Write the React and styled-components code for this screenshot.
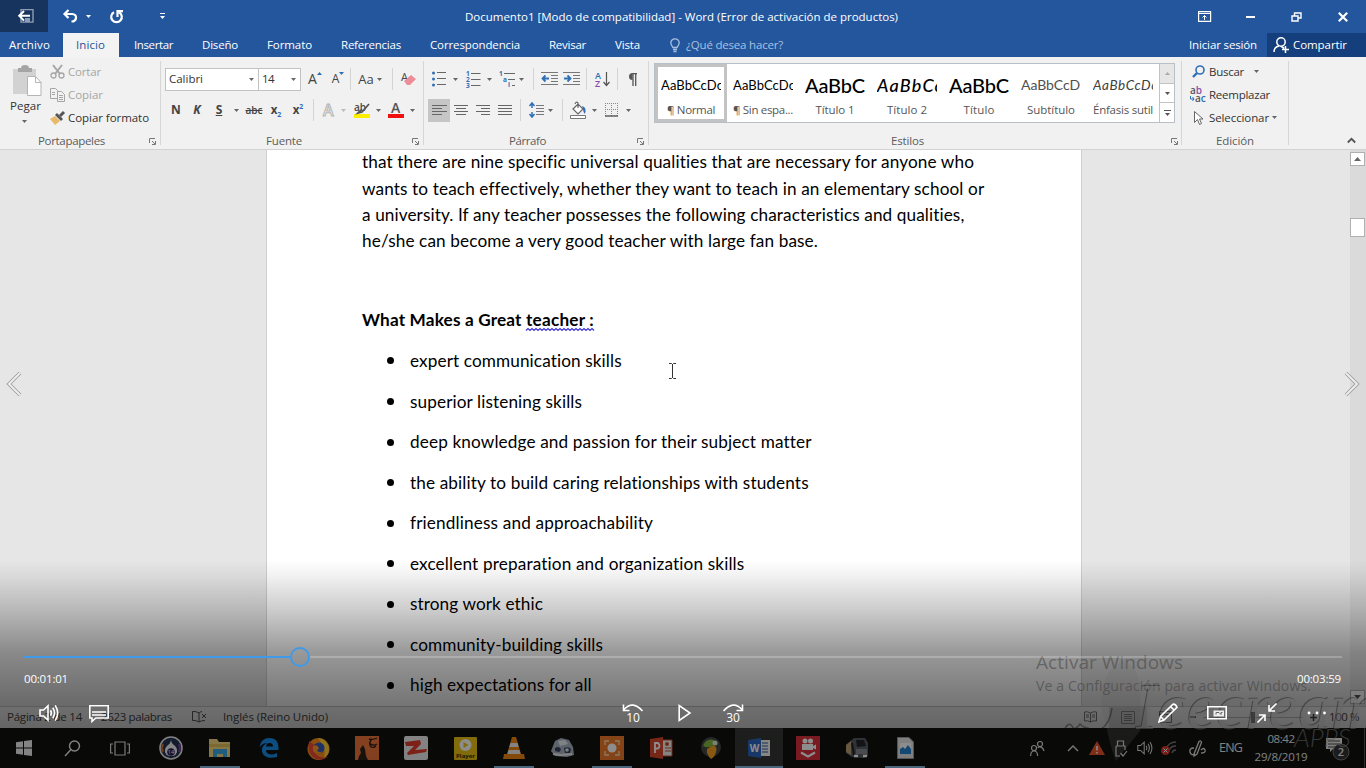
import React, { useLayoutEffect, useRef } from 'react';
import styled, { createGlobalStyle, css } from 'styled-components';

const Global = createGlobalStyle`
  * { box-sizing: border-box; }
  body { margin: 0; overflow: hidden; background: #000; }
  svg { display: block; flex: none; overflow: visible; }
`;

const ui = "'Open Sans', 'Noto Sans', sans-serif";
const calibri = "Lato, 'Open Sans', sans-serif";

/* ---------- text fitted to a measured width by tracking ---------- */
const Label = styled.span`
  display: block;
  flex: none;
  white-space: pre;
  font-family: ${(p) => p.$font || ui};
  font-size: ${(p) => p.$size || 11.5}px;
  line-height: ${(p) => p.$lh || 16}px;
  font-weight: ${(p) => p.$weight || 400};
  font-style: ${(p) => (p.$italic ? 'italic' : 'normal')};
  color: ${(p) => p.$color || 'inherit'};
  margin-left: ${(p) => p.$g || 0}px;
`;

function Text({ w, children, ...rest }) {
  const ref = useRef(null);
  useLayoutEffect(() => {
    const el = ref.current;
    if (!w) return;
    el.style.width = 'max-content';
    el.style.letterSpacing = '0px';
    const natural = el.getBoundingClientRect().width;
    el.style.letterSpacing = `${(w - natural) / String(children).length}px`;
    el.style.width = `${w}px`;
  }, [w, children]);
  return <Label ref={ref} {...rest}>{children}</Label>;
}

/* ---------- shell ---------- */
const Screen = styled.div`
  position: relative;
  width: 1366px;
  height: 768px;
  overflow: hidden;
  display: flex;
  flex-direction: column;
  font-family: ${ui};
`;
const Row = styled.div`
  display: flex;
  align-items: center;
  flex: none;
  height: ${(p) => (p.$h ? `${p.$h}px` : 'auto')};
  padding-left: ${(p) => p.$pl || 0}px;
`;
const Cell = styled.div`
  flex: none;
  width: ${(p) => p.$w}px;
  height: ${(p) => (p.$h ? `${p.$h}px` : 'auto')};
  margin-left: ${(p) => p.$g || 0}px;
  display: flex;
  align-items: center;
  justify-content: center;
  background: ${(p) => p.$bg || 'none'};
`;
const TitleBar = styled(Row)`
  height: 33px;
  background: #24569e;
  color: #fff;
`;
const SaveBox = styled.div`
  width: 48px;
  height: 32px;
  align-self: flex-start;
  background: #17345f;
  display: flex;
  align-items: center;
  justify-content: center;
  padding-left: 4px;
`;
const TabBar = styled(Row)`
  height: 24px;
  background: #24569e;
  color: #fff;
`;
const ActiveTab = styled.div`
  width: 56px;
  height: 24px;
  margin-left: 13px;
  padding-left: 13px;
  display: flex;
  align-items: center;
  background: #f3f3f3;
  color: #24569e;
`;
const Share = styled.div`
  width: 99px;
  height: 24px;
  margin-left: 10px;
  padding-left: 6px;
  display: flex;
  align-items: center;
  background: #143f7c;
`;
const Ribbon = styled.div`
  display: flex;
  flex: none;
  height: 93px;
  background: #f1f1f1;
  border-bottom: 1px solid #d2d2d2;
  color: #444;
`;
const Group = styled.div`
  position: relative;
  flex: none;
  width: ${(p) => p.$w}px;
  display: flex;
  flex-direction: column;
  padding-top: 6px;
  &::after {
    content: '';
    position: absolute;
    right: 0;
    top: 4px;
    width: 1px;
    height: 84px;
    background: #d6d6d6;
  }
`;
const ClipTools = styled.div`
  display: flex;
  height: 70px;
`;
const PasteButton = styled.div`
  width: 34px;
  margin-left: 8px;
  padding-top: 2px;
`;
const PasteCaret = styled.div`
  display: flex;
  justify-content: center;
  padding: 6px 2px 0 0;
`;
const ClipList = styled.div`
  margin-top: -3px;
`;
const Collapse = styled.div`
  display: flex;
  align-items: flex-end;
  width: 67px;
  padding: 0 0 6px 58px;
`;
const GroupFoot = styled.div`
  display: flex;
  align-items: center;
  height: 16px;
  margin-top: auto;
  color: #5c5c5c;
`;
const Sep = styled.div`
  flex: none;
  width: 1px;
  height: 22px;
  margin-left: ${(p) => p.$g || 0}px;
  background: #d4d4d4;
`;
const Combo = styled.div`
  flex: none;
  width: ${(p) => p.$w}px;
  height: 23px;
  margin-left: ${(p) => p.$g || 0}px;
  padding: 0 4px 0 3px;
  border: 1px solid #c2c2c2;
  background: #fff;
  display: flex;
  align-items: center;
  justify-content: space-between;
  color: #333;
`;
const Glyph = styled.span`
  font-family: ${ui};
  font-size: ${(p) => p.$size || 13}px;
  font-weight: ${(p) => p.$weight || 400};
  font-style: ${(p) => (p.$italic ? 'italic' : 'normal')};
  text-decoration: ${(p) => p.$deco || 'none'};
  color: ${(p) => p.$color || '#444'};
  line-height: 16px;
  sub, sup { font-size: 7px; color: #2f6fb5; line-height: 0; }
`;
const Gallery = styled.div`
  display: flex;
  width: 521px;
  height: 60px;
  margin-left: 5px;
  border: 1px solid #b9bfc6;
  background: #fff;
`;
const StyleCard = styled.div`
  flex: none;
  width: 72px;
  height: 58px;
  display: flex;
  flex-direction: column;
  align-items: center;
  justify-content: space-between;
  padding: ${(p) => (p.$sel ? '7px 0 1px' : '10px 0 4px')};
  ${(p) => p.$sel && css`
    border: 3px solid #c3c3c3;
  `}
`;
const Sample = styled.div`
  width: 60px;
  height: 22px;
  overflow: hidden;
  display: flex;
  align-items: center;
  justify-content: flex-start;
`;
const GalleryScroll = styled.div`
  width: 15px;
  display: flex;
  flex-direction: column;
  border-left: 1px solid #c3c3c3;
`;
const ScrollCell = styled.div`
  flex: 1;
  display: flex;
  align-items: center;
  justify-content: center;
  background: ${(p) => p.$bg || '#fff'};
  & + & { border-top: 1px solid #c3c3c3; }
`;
const Workspace = styled.div`
  flex: none;
  height: 556px;
  display: flex;
  background: #e6e6e6;
  overflow: hidden;
`;
const Page = styled.div`
  width: 816px;
  height: 556px;
  margin-left: 266px;
  border-left: 1px solid #cfcfcf;
  border-right: 1px solid #cfcfcf;
  padding-left: 95px;
  background: #fff;
  color: #000;
`;
const Paragraph = styled.div`
  margin-top: -1px;
  height: 157px;
`;
const Heading = styled.div`
  display: flex;
  height: 27px;
  margin-bottom: 7.7px;
`;
const Wavy = styled.div`
  display: flex;
  flex-direction: column;
`;
const Bullet = styled.div`
  display: flex;
  align-items: center;
  height: 40.55px;
  padding-left: 25px;
  &::before {
    content: '';
    width: 7px;
    height: 7px;
    margin-right: 16px;
    border-radius: 50%;
    background: #000;
  }
`;
const Scrollbar = styled.div`
  width: 16px;
  height: 556px;
  margin-left: auto;
  padding: 2px 1px 2px 0;
  background: #dadada;
  display: flex;
  flex-direction: column;
`;
const ScrollBox = styled.div`
  height: ${(p) => p.$h}px;
  margin-top: ${(p) => p.$mt || 0};
  border: 1px solid #b0b0b0;
  background: #fff;
  display: flex;
  align-items: center;
  justify-content: center;
`;
const StatusBar = styled(Row)`
  height: 22px;
  background: #f1f1f1;
  border-top: 1px solid #c6c6c6;
  color: #444;
  padding-bottom: 1px;
`;
const Taskbar = styled(Row)`
  height: 40px;
  background: #10110e;
  color: #e8e8e8;
`;
const Task = styled.div`
  flex: none;
  width: ${(p) => p.$w || 48}px;
  height: 40px;
  display: flex;
  flex-direction: column;
  align-items: center;
  justify-content: center;
  background: ${(p) => (p.$active ? '#333533' : 'none')};
  box-shadow: ${(p) => (p.$active ? 'inset 0 -2px #86bce4' : 'none')};
`;
const TaskOpen = styled(Task)`
  background: linear-gradient(#86bce4, #86bce4) center bottom / 40px 2px no-repeat;
`;
const Clock = styled.div`
  width: 54px;
  margin-left: 12px;
  display: flex;
  flex-direction: column;
  align-items: center;
`;
const Peek = styled.div`
  width: 1px;
  height: 40px;
  margin-left: 15px;
  background: #555;
`;

/* ---------- things that lie over the window ---------- */
const Watermark = styled.div`
  position: absolute;
  left: 1036px;
  top: 649px;
  color: rgba(125, 125, 125, 0.6);
`;
const Brand = styled.div`
  position: absolute;
  left: 1060px;
  top: 655px;
  width: 306px;
  height: 110px;
`;
const BrandWord = styled.div`
  position: absolute;
  left: 76px;
  top: 18px;
  font-family: 'Liberation Serif', serif;
  font-style: italic;
  font-size: 66px;
  line-height: 68px;
  color: #e2e2e2;
  opacity: 0.42;
  text-shadow: -1px -1px 0 #303030;
`;
const BrandSub = styled.div`
  position: absolute;
  left: 234px;
  top: 65px;
  font-family: Lato, sans-serif;
  font-weight: 300;
  font-style: italic;
  font-size: 26px;
  line-height: 34px;
  color: rgba(150, 150, 150, 0.6);
`;
const Player = styled.div`
  position: absolute;
  inset: 560px 0 0 0;
  display: flex;
  flex-direction: column;
  color: #fff;
  background: linear-gradient(
    rgba(0, 0, 0, 0) 0,
    rgba(0, 0, 0, 0.05) 15px,
    rgba(0, 0, 0, 0.2) 50px,
    rgba(0, 0, 0, 0.4) 92px,
    rgba(0, 0, 0, 0.53) 140px,
    rgba(0, 0, 0, 0.58) 168px,
    rgba(0, 0, 0, 0.44) 169px,
    rgba(0, 0, 0, 0.46) 208px
  );
`;
const Seek = styled.div`
  display: flex;
  align-items: center;
  height: 20px;
  margin: 87px 24px 0;
`;
const Played = styled.div`
  width: 266px;
  height: 2px;
  background: #3f9bea;
`;
const Thumb = styled.div`
  width: 20px;
  height: 20px;
  border: 2px solid #3f9bea;
  border-radius: 50%;
`;
const Remaining = styled.div`
  flex: 1;
  height: 2px;
  background: rgba(255, 255, 255, 0.22);
`;
const Times = styled.div`
  display: flex;
  justify-content: space-between;
  margin: 4px 25px 0 24px;
`;
const Controls = styled.div`
  display: flex;
  align-items: center;
  height: 30px;
  margin-top: 11px;
`;
const Chevron = styled.div`
  position: absolute;
  top: 370px;
  left: ${(p) => p.$x}px;
`;
const Caret = styled.div`
  position: absolute;
  left: 668px;
  top: 363px;
`;

/* ---------- icons ---------- */
const Svg = ({ w = 16, h = 16, vw, vh, children, ...r }) => (
  <svg width={w} height={h} viewBox={`0 0 ${vw || w} ${vh || h}`} fill="none" {...r}>{children}</svg>
);
const Down = ({ c = '#666', g, w = 7 }) => (
  <Cell $w={w} $g={g}><Svg w={5} h={3}><path d="M0 0h5L2.5 3z" fill={c} /></Svg></Cell>
);
const Launcher = () => (
  <Svg w={7} h={7}><path d="M.5 5V.5H6M3 3l3 3M6.5 3v3.5H3" stroke="#777" /></Svg>
);
const Lines = ({ rows, w = 16 }) => (
  <Svg w={w} h={10}>
    {rows.map(([a, b], i) => <path key={i} d={`M${a} ${i * 3 + 0.5}H${b}`} stroke="#666" />)}
  </Svg>
);
const Volume = ({ w = 20, sw = 1.6, c = '#fff' }) => (
  <Svg w={w} h={w} vw={20} vh={20} stroke={c} strokeWidth={sw}>
    <path d="M1 7h3.500L9 2.800v14.400L4.500 13H1zM11.500 7.200q1.800 2.800 0 5.600M13.800 4.800q3.400 5.200 0 10.400M16.200 2.400q5 7.600 0 15.200" />
  </Svg>
);
const Skip = ({ n, flip }) => (
  <Svg w={22} h={20}>
    <g transform={flip ? 'translate(22 0) scale(-1 1)' : undefined} stroke="#fff" strokeWidth="1.600">
      <path d="M2 6.500Q10.500-3 20.500 8M1.500 1.500v6h6" />
    </g>
    <text x="11" y="18.500" textAnchor="middle" fill="#fff" fontFamily="Open Sans" fontSize="12">{n}</text>
  </Svg>
);

const styles = [
  { s: 'AaBbCcDc', n: '¶ Normal', nw: 48, size: 13, w: 62, sel: true },
  { s: 'AaBbCcDc', n: '¶ Sin espa...', nw: 60, size: 13, w: 62 },
  { s: 'AaBbC', n: 'Título 1', nw: 39, size: 20, w: 60, h: 1 },
  { s: 'AaBbCc', n: 'Título 2', nw: 40, size: 18, w: 67, it: true, h: 1 },
  { s: 'AaBbC', n: 'Título', nw: 31, size: 20, w: 60, h: 1 },
  { s: 'AaBbCcD', n: 'Subtítulo', nw: 48, size: 14, w: 59, c: '#505050' },
  { s: 'AaBbCcDc', n: 'Énfasis sutil', nw: 60, size: 13.5, w: 65, c: '#404040', it: true },
];

const skills = [
  ['expert communication skills', 212],
  ['superior listening skills', 172],
  ['deep knowledge and passion for their subject matter', 401],
  ['the ability to build caring relationships with students', 399],
  ['friendliness and approachability', 243],
  ['excellent preparation and organization skills', 335],
  ['strong work ethic', 133],
  ['community-building skills', 193],
  ['high expectations for all', 182],
];

const Clipboard = () => (
  <Group $w={161}>
    <ClipTools>
      <PasteButton>
        <Svg w={34} h={33}>
          <path d="M5 4h23v25H5z" fill="#d2d2d2" />
          <path d="M10 3h3q0-3 4-3t4 3h3v4H10z" fill="#a5a5a5" />
          <path d="M19.500 11.500h8l5.500 6v13H19.500z" fill="#fff" stroke="#b5b5b5" />
          <path d="M27.500 11.500v6h6" stroke="#b5b5b5" />
        </Svg>
        <Text w={31} $g={2} $color="#333">Pegar</Text>
        <PasteCaret><Down w={8} /></PasteCaret>
      </PasteButton>
      <ClipList>
        <Row $h={23} $pl={8}>
          <Svg w={15} h={15} stroke="#a6a6a6" strokeWidth="1.300">
            <circle cx="3.500" cy="11.500" r="2.500" /><circle cx="11.500" cy="11.500" r="2.500" /><path d="M3 1l7 9M12 1L5 10" strokeWidth="2" />
          </Svg>
          <Text w={33} $g={3} $color="#a6a6a6">Cortar</Text>
        </Row>
        <Row $h={23} $pl={8}>
          <Svg w={15} h={14} stroke="#a6a6a6">
            <path d="M.5.5h5l2 2v8h-7zM7.500 3.500h4l3 3v7h-7zM2 4.500h3M2 6.500h3M9 7.500h4M9 9.500h4M9 11.500h4" />
          </Svg>
          <Text w={35} $g={3} $color="#a6a6a6">Copiar</Text>
        </Row>
        <Row $h={23} $pl={8}>
          <Svg w={15} h={14}>
            <path d="M0 8l5-3 5 5-5 4z" fill="#e8b968" /><path d="M5 4l2-2 6 6-2 2z" fill="#555" /><path d="M10 5l4-4" stroke="#555" strokeWidth="3" />
          </Svg>
          <Text w={81} $g={3} $color="#333">Copiar formato</Text>
        </Row>
      </ClipList>
    </ClipTools>
    <GroupFoot><Text w={67} $g={38}>Portapapeles</Text><Cell $w={7} $g={44}><Launcher /></Cell></GroupFoot>
  </Group>
);

const FontGroup = () => (
  <Group $w={263}>
    <Row $h={32}>
      <Combo $w={94} $g={4}><Text w={34}>Calibri</Text><Down w={5} /></Combo>
      <Combo $w={43} $g={-1}><Text w={12}>14</Text><Down w={5} /></Combo>
      <Cell $w={16} $g={6}><Glyph $size={14}>A</Glyph><Svg w={5} h={14}><path d="M0 3h5L2.500 0z" fill="#2f6fb5" /></Svg></Cell>
      <Cell $w={16} $g={7}><Glyph $size={12}>A</Glyph><Svg w={5} h={14}><path d="M0 0h5L2.500 3z" fill="#2f6fb5" /></Svg></Cell>
      <Sep $g={4} />
      <Cell $w={18} $g={6}><Glyph $size={13}>Aa</Glyph></Cell><Down g={1} />
      <Sep $g={9} />
      <Cell $w={18} $g={7}>
        <Svg w={16} h={16}>
          <text x="0" y="10" fontFamily="Open Sans" fontSize="11" fill="#444">A</text>
          <path d="M3 10l7-6 5 4-6 6H6z" fill="#ec8d97" />
        </Svg>
      </Cell>
    </Row>
    <Row $h={30}>
      <Cell $w={14} $g={8}><Glyph $weight={700} $size={12}>N</Glyph></Cell>
      <Cell $w={14} $g={7}><Glyph $weight={700} $size={12} $italic>K</Glyph></Cell>
      <Cell $w={14} $g={8}><Glyph $weight={700} $size={12} $deco="underline">S</Glyph></Cell>
      <Down g={7} />
      <Cell $w={18} $g={5}><Glyph $size={10} $weight={600} $deco="line-through">abc</Glyph></Cell>
      <Cell $w={16} $g={5}><Glyph $weight={700} $size={11.5}>x<sub>2</sub></Glyph></Cell>
      <Cell $w={16} $g={6}><Glyph $weight={700} $size={11.5}>x<sup>2</sup></Glyph></Cell>
      <Sep $g={7} />
      <Cell $w={16} $g={7}>
        <Svg w={16} h={16}><text x="2" y="13.500" fontFamily="Open Sans" fontWeight="600" fontSize="16" fill="#f4f4f4" stroke="#b5b5b5">A</text></Svg>
      </Cell>
      <Down g={3} c="#bbb" />
      <Cell $w={18} $g={6}>
        <Svg w={18} h={16}>
          <path d="M1 12h16v4H1z" fill="#ffee00" />
          <text x="1" y="8.500" fontFamily="Open Sans" fontWeight="600" fontSize="10" fill="#444">ab</text>
          <path d="M16 2L9 10l-4 1 3-3" stroke="#555" strokeWidth="1.800" />
        </Svg>
      </Cell>
      <Down g={4} />
      <Cell $w={16} $g={6}>
        <Svg w={16} h={16}><path d="M0 12h16v4H0z" fill="#f01010" /><text x="3" y="10.500" fontFamily="Open Sans" fontWeight="600" fontSize="14" fill="#555">A</text></Svg>
      </Cell>
      <Down g={5} />
    </Row>
    <GroupFoot><Text w={36} $g={105}>Fuente</Text><Cell $w={7} $g={110}><Launcher /></Cell></GroupFoot>
  </Group>
);

const ParagraphGroup = () => (
  <Group $w={225}>
    <Row $h={32}>
      <Cell $w={16} $g={7}>
        <Svg w={14} h={16}>{[2, 8, 14].map((y) => <g key={y}><circle cx="1.500" cy={y} r="1.500" fill="#2f6fb5" /><path d={`M5 ${y - 0.5}h9`} stroke="#666" /></g>)}</Svg>
      </Cell>
      <Down g={5} />
      <Cell $w={16} $g={6}>
        <Svg w={15} h={16}>{[1, 2, 3].map((n) => <g key={n}><text x="0" y={n * 6 - 1} fontFamily="Open Sans" fontWeight="700" fontSize="6.500" fill="#2f6fb5">{n}</text><path d={`M5 ${n * 6 - 3.5}h9.500`} stroke="#666" /></g>)}</Svg>
      </Cell>
      <Down g={5} />
      <Cell $w={18} $g={5}>
        <Svg w={17} h={16}>
          <path d="M5 2.500h11M9 8.500h7M13 14.500h3" stroke="#666" />
          <text x="0" y="5" fontFamily="Open Sans" fontWeight="700" fontSize="6.500" fill="#2f6fb5">1</text>
          <text x="4" y="11" fontFamily="Open Sans" fontWeight="700" fontSize="6.500" fill="#2f6fb5">a</text>
          <text x="9" y="16" fontFamily="Open Sans" fontWeight="700" fontSize="6.500" fill="#2f6fb5">i</text>
        </Svg>
      </Cell>
      <Down g={2} />
      <Sep $g={8} />
      {['M4.500 3.500L1.500 6.500L4.500 9.500M2 6.500H8', 'M4.500 3.500l3 3l-3 3M7 6.500H1'].map((d, i) => (
        <Cell key={d} $w={17} $g={i ? 5 : 7}>
          <Svg w={17} h={14}>
            <path d="M0 .5h17M10 3.500h7M10 6.500h7M10 9.500h7M0 12.500h17" stroke="#777" />
            <path d={d} stroke="#2f6fb5" strokeWidth="1.800" />
          </Svg>
        </Cell>
      ))}
      <Sep $g={6} />
      <Cell $w={16} $g={7}>
        <Svg w={15} h={17}>
          <text x="0" y="7.500" fontFamily="Open Sans" fontWeight="600" fontSize="9" fill="#2f6fb5">A</text>
          <text x="0" y="16" fontFamily="Open Sans" fontWeight="600" fontSize="9" fill="#8a4bab">Z</text>
          <path d="M11.500 1v13M8.500 11l3 3.500 3-3.500" stroke="#555" strokeWidth="1.200" />
        </Svg>
      </Cell>
      <Sep $g={7} />
      <Cell $w={14} $g={7}>
        <Svg w={10} h={13}><path d="M10 .7H5M6 0v13M8.700 0v13" stroke="#555" strokeWidth="1.300" /><path d="M5.500 0a3.500 3.500 0 0 0 0 7z" fill="#555" /></Svg>
      </Cell>
    </Row>
    <Row $h={30}>
      <Cell $w={22} $h={23} $g={4} $bg="#c6c6c6"><Lines rows={[[0, 15], [0, 10], [0, 15], [0, 10]]} w={15} /></Cell>
      <Cell $w={16} $g={3}><Lines rows={[[1, 15], [3, 13], [1, 15], [3, 13]]} /></Cell>
      <Cell $w={16} $g={6}><Lines rows={[[1, 15], [6, 15], [1, 15], [6, 15]]} /></Cell>
      <Cell $w={16} $g={6}><Lines rows={[[1, 15], [1, 15], [1, 15], [1, 15]]} /></Cell>
      <Sep $g={7} />
      <Cell $w={16} $g={7}>
        <Svg w={15} h={16}>
          <path d="M3 1v5M3 10v5M.5 4L3 1l2.500 3M.5 12L3 15l2.500-3" stroke="#2f6fb5" strokeWidth="1.500" />
          <path d="M7 3.500h8M7 6.500h8M7 9.500h8M7 12.500h8" stroke="#777" />
        </Svg>
      </Cell>
      <Down g={3} />
      <Sep $g={8} />
      <Cell $w={18} $g={6}>
        <Svg w={17} h={17}>
          <path d="M3 7l5-5 5 5-5 5zM8 6V1Q6-1 5 2" stroke="#666" strokeWidth="1.200" fill="#fff" />
          <path d="M12 4q5 1 3 8-2-2-2-5z" fill="#2f6fb5" /><path d="M.5 13.500h15v3H.5z" fill="#fff" stroke="#777" />
        </Svg>
      </Cell>
      <Down g={4} />
      <Cell $w={15} $g={6}>
        <Svg w={13} h={14}><path d="M.5 0v13M12.500 0v13M6.500 0v13M0 .5h13M0 6.500h13" stroke="#888" strokeDasharray="1 1" /><path d="M0 13h13" stroke="#555" strokeWidth="1.400" /></Svg>
      </Cell>
      <Down g={6} />
    </Row>
    <GroupFoot><Text w={37} $g={85}>Párrafo</Text><Cell $w={7} $g={91}><Launcher /></Cell></GroupFoot>
  </Group>
);

const StylesGroup = () => (
  <Group $w={533}>
    <Gallery>
      {styles.map((s, i) => (
        <StyleCard key={i} $sel={s.sel}>
          <Sample><Text w={s.w} $font={calibri} $size={s.size} $lh={22} $color={s.c || '#000'} $italic={s.it} $weight={s.h ? 500 : 400}>{s.s}</Text></Sample>
          <Text w={s.nw} $color="#555">{s.n}</Text>
        </StyleCard>
      ))}
      <GalleryScroll>
        <ScrollCell $bg="#e6e6e6"><Svg w={5} h={3}><path d="M0 3h5L2.500 0z" fill="#aaa" /></Svg></ScrollCell>
        <ScrollCell><Svg w={5} h={3}><path d="M0 0h5L2.500 3z" fill="#555" /></Svg></ScrollCell>
        <ScrollCell><Svg w={7} h={6}><path d="M0 .5h7" stroke="#555" /><path d="M1 3h5L3.500 6z" fill="#555" /></Svg></ScrollCell>
      </GalleryScroll>
    </Gallery>
    <GroupFoot><Text w={33} $g={242}>Estilos</Text><Cell $w={7} $g={247}><Launcher /></Cell></GroupFoot>
  </Group>
);

const EditGroup = () => (
  <Group $w={107}>
    <Row $h={17} $pl={10}>
      <Svg w={13} h={13}><circle cx="8" cy="5" r="4" stroke="#2f6fb5" strokeWidth="1.600" /><path d="M5 8L1 12" stroke="#2f6fb5" strokeWidth="2.400" /></Svg>
      <Text w={35} $g={4} $color="#333">Buscar</Text><Down g={9} />
    </Row>
    <Row $h={29} $pl={8}>
      <Svg w={17} h={16}>
        <text x="0" y="7" fontFamily="Open Sans" fontWeight="600" fontSize="10" fill="#555">a<tspan fill="#8a4bab">b</tspan></text>
        <text x="5" y="14.500" fontFamily="Open Sans" fontWeight="600" fontSize="10" fill="#555">a<tspan fill="#2f6fb5">c</tspan></text>
        <path d="M.5 9v3h3.500M2.500 10l1.500 2-1.500 2" stroke="#2f6fb5" />
      </Svg>
      <Text w={61} $g={2} $color="#333">Reemplazar</Text>
    </Row>
    <Row $h={17} $pl={12}>
      <Svg w={9} h={14}><path d="M.5.5v11l3-3 2 5 2-1-2-4.500h3.500z" stroke="#666" fill="#fff" /></Svg>
      <Text w={60} $g={6} $color="#333">Seleccionar</Text><Down g={2} />
    </Row>
    <GroupFoot><Text w={38} $g={34}>Edición</Text></GroupFoot>
  </Group>
);

const tabs = [
  ['Insertar', 39, 15], ['Diseño', 36, 29], ['Formato', 45, 29], ['Referencias', 60, 29],
  ['Correspondencia', 90, 29], ['Revisar', 37, 29], ['Vista', 25, 29],
];

const Bar = () => (
  <Taskbar>
    <Task><Svg w={16} h={16}><path d="M0 2.300L7 1.300v6.300H0zM8 1.100L16 0v7.600H8zM0 8.500h7v6.300L0 13.800zM8 8.500h8V16l-8-1.100z" fill="#eee" /></Svg></Task>
    <Task><Svg w={17} h={17} stroke="#eee" strokeWidth="1.400"><circle cx="10.500" cy="6" r="5" /><path d="M7 9.500L1 16" /></Svg></Task>
    <Task><Svg w={20} h={15} stroke="#ddd" strokeWidth="1.200"><path d="M5 1h10v13H5zM3 3H.6v9H3M17 3h2.400v9H17" /></Svg></Task>
    <Task $w={54}>
      <Svg w={24} h={24}><circle cx="12" cy="12" r="11" fill="#223252" stroke="#e8e8e8" strokeWidth="1.600" /><path d="M4 8a9 9 0 0 0 0 8" stroke="#cc6b28" strokeWidth="2" /><path d="M20 8a9 9 0 0 1 0 8" stroke="#7a3f9a" strokeWidth="2" /><path d="M12 3q0 4 3 6 5 4 2 9-1 2-5 2t-5-2q-3-5 2-9 3-2 3-6" fill="#f2f2f2" /><circle cx="12" cy="16" r="3.800" fill="#2b2050" /><text x="12" y="18.200" textAnchor="middle" fontSize="5.500" fontFamily="Open Sans" fill="#fff">14</text></Svg>
    </Task>
    <TaskOpen $w={44}>
      <Svg w={22} h={19}><path d="M0 0h8l2 3h11v15H0z" fill="#f3d77e" /><path d="M0 5h21v3H0z" fill="#e3bd58" /><path d="M4 10h14v8h-4v-3H8v3H4z" fill="#3ba9e8" /></Svg>
    </TaskOpen>
    <Task $w={54}>
      <Svg w={20} h={20}><path d="M.5 9Q2 0 10.500 0 19 0 19.500 9v3H7q0 4 5 4.500 3 0 6-1.500v4Q6 22 3 14 2 8 8 5 4 5 .5 9zM7 8.500h7Q14 5 10.500 5 7.500 5 7 8.500z" fill="#178be8" fillRule="evenodd" /></Svg>
    </Task>
    <Task $w={44}>
      <Svg w={23} h={23}><circle cx="11.500" cy="12" r="11" fill="#ff8c1a" /><path d="M2 4Q0 15 6 20t15 0Q10 22 8 15 6 10 10 8L6 7z" fill="#ee4a38" /><path d="M11 1q10 1 11 11 0 6-5 9 3-9-6-20" fill="#ffd23a" /><circle cx="12" cy="11" r="5.500" fill="#3558b8" /><path d="M6 9q4-2 6 2l-2 3q3 2 6 0-5 6-10 0z" fill="#ff9b20" /></Svg>
    </Task>
    <Task $w={54}>
      <Svg w={24} h={24}><path d="M0 0h24v24H0z" fill="#ef7438" /><path d="M3 24q1-5 3-7l-1-4 3-4 2 4 1 7 2 4z" fill="#2b2018" /><path d="M14 3q4 1 8-1M15 7.500q3 3 7 .5M17 3q-4 4-1 8 3 1 5-1" stroke="#2b2018" strokeWidth="1.300" /></Svg>
    </Task>
    <Task $w={44}>
      <Svg w={24} h={24}><rect width="24" height="24" rx="2" fill="#ececec" /><path d="M1 6l15-2 1 4-6 6 12-1-1 3-18 3-1-2 7-7-8 0z" fill="#e23c2c" /></Svg>
    </Task>
    <Task $w={54}>
      <Svg w={23} h={23}><rect width="23" height="23" rx="1" fill="#ebc313" /><circle cx="11.500" cy="8" r="6" fill="#fff" /><path d="M9.500 5v6l5-3z" fill="#ebc313" /><text x="11.500" y="20.500" textAnchor="middle" fontFamily="Open Sans" fontWeight="700" fontSize="6" fill="#332b00">Player</text></Svg>
    </Task>
    <TaskOpen $w={44}>
      <Svg w={22} h={22}><path d="M1 17h20l1 5H0zM9 0h4l5 17H4z" fill="#f18713" /><path d="M7.500 6h7l1.200 4H6.300zM5.500 13h11l1 4h-13z" fill="#eee" /></Svg>
    </TaskOpen>
    <Task $w={54}>
      <Svg w={24} h={22}><path d="M0 14L4 4l6-3 8 2 4 7 1 8-7 2-12-1z" fill="#a9b3c2" /><path d="M7 4l7-1 3 4-8 2z" fill="#e6eaf0" /><path d="M4 11q3-2 5 0t-1 4l-4-1zM13 11q5-2 7 1l-1 4h-5z" fill="#38445c" /><circle cx="16" cy="13" r="1.800" fill="#dde4ee" /><path d="M2 17l8 1 11-1" stroke="#eee" strokeWidth="2" /></Svg>
    </Task>
    <TaskOpen $w={44}>
      <Svg w={24} h={24}><path d="M0 0h24v24H0z" fill="#f07a28" /><circle cx="12" cy="12" r="4.500" fill="#fff" /><path d="M5 9V5h4M15 5h4v4M19 15v4h-4M9 19H5v-4" stroke="#ffd9b5" strokeWidth="1.300" /></Svg>
    </TaskOpen>
    <Task $w={54}>
      <Svg w={22} h={22}><path d="M12 3h10v16H12z" fill="#f0f0f0" stroke="#c84b2f" /><path d="M15 11h6M15 14h6" stroke="#c84b2f" /><circle cx="17" cy="7" r="2" fill="#c84b2f" /><path d="M0 2l13-2v22L0 20z" fill="#d9472b" /><path d="M5 16V6h3q3 3 0 5.500H5" stroke="#fff" strokeWidth="1.800" /></Svg>
    </Task>
    <Task $w={46}>
      <Svg w={22} h={23}><circle cx="11" cy="10" r="10" fill="#3f4643" /><path d="M11 22q-5-5-4-10l6-4q5 2 3 7-1 5-5 7" fill="#f6a020" /><path d="M3 9q3-8 11-6l-1 5q-4 4-10 1z" fill="#84b840" /><circle cx="15" cy="6" r="2.500" fill="#dfe8d8" /></Svg>
    </Task>
    <Task $w={1} />
    <Task $w={48} $active>
      <Svg w={22} h={20}><path d="M12 2h10v16H12z" fill="#f4f4f4" /><path d="M14 5h6M14 8h6M14 11h6M14 14h6" stroke="#2b579a" /><path d="M0 2l13-2v20L0 18z" fill="#2b66bd" /><text x="6.500" y="13.500" textAnchor="middle" fontFamily="Open Sans" fontWeight="700" fontSize="10" fill="#fff">W</text></Svg>
    </Task>
    <Task $w={50}>
      <Svg w={24} h={24}><path d="M0 0h24v24H0z" fill="#d9303c" /><circle cx="9" cy="5" r="2.500" fill="#fff" /><circle cx="14.500" cy="5" r="2.500" fill="#fff" /><path d="M6 8h11v2l3-1.500v5L17 12v2H6z" fill="#fff" /><path d="M5 16.500l7 4 7-4" stroke="#fff" strokeWidth="2.200" /></Svg>
    </Task>
    <Task $w={48}>
      <Svg w={24} h={22}><path d="M1 8l8-7h11l3 5v13l-5 2-11-1-6-4z" fill="#555a63" /><path d="M11 3h8l2 6-9 1z" fill="#20232a" /><path d="M11 12h11v5H11z" fill="#85888e" /><path d="M1 8l5-4v14l-5-3z" fill="#bba078" /><path d="M7 6l2 12" stroke="#222" strokeWidth="2" /><path d="M9 19h4M18 19h4" stroke="#fff" strokeWidth="2.500" /></Svg>
    </Task>
    <TaskOpen $w={48}>
      <Svg w={17} h={22}><path d="M.5.5H12l4.500 4.500v16.500H.5z" fill="#e6e6e6" stroke="#999" /><path d="M3 6h11v11H3z" fill="#fff" /><path d="M3 17v-5l3-2 2 2 3-4 3 4v5z" fill="#2183d0" /></Svg>
    </TaskOpen>
    <Cell $w={16} $g={100}><Svg w={15} h={15} stroke="#ddd" strokeWidth="1.200"><circle cx="10" cy="3" r="2.500" /><circle cx="4" cy="7" r="2.500" /><path d="M.6 15q0-5 3.500-5t3.500 5M7.500 6.500q5-2 6.500 3.500" /></Svg></Cell>
    <Cell $w={14} $g={21}><Svg w={12} h={7}><path d="M1 6l5-5 5 5" stroke="#ddd" strokeWidth="1.400" /></Svg></Cell>
    <Cell $w={16} $g={9}><Svg w={16} h={14}><path d="M8 0l8 14H0z" fill="#e8542c" /><path d="M8 5v4.500M8 11v1.500" stroke="#fff" strokeWidth="1.500" /></Svg></Cell>
    <Cell $w={14} $g={9}><Svg w={12} h={17} stroke="#ddd" strokeWidth="1.200"><path d="M2.500 6V1h6v5M1 6h9v4M1 6v10h4M5.500 13l2.500 3 4-5" /></Svg></Cell>
    <Cell $w={16} $g={9}><Volume w={16} c="#ddd" sw={1.3} /></Cell>
    <Cell $w={16} $g={8}><Svg w={16} h={14}><path d="M5 8a10 10 0 0 1 10-7M8 10a7 7 0 0 1 7-5M11 12a4 4 0 0 1 4-3" stroke="#777" strokeWidth="1.300" /><circle cx="4.500" cy="9.500" r="4.500" fill="#d8352b" /><path d="M2.500 7.500l4 4M6.500 7.500l-4 4" stroke="#fff" /></Svg></Cell>
    <Cell $w={18} $g={11}><Svg w={17} h={16} stroke="#ddd" strokeWidth="1.300"><path d="M5 14L10 1.500q2-1.500 2.500 1L8 14l-3 2zM5 8Q0 8 1 12q1 4 5 2M12 10q3-3 4 0t-4 3" /></Svg></Cell>
    <Text w={23} $g={13} $size={12.5} $color="#e8e8e8">ENG</Text>
    <Clock>
      <Text w={27} $size={11.5} $lh={18}>08:42</Text>
      <Text w={53} $size={11.5} $lh={18}>29/8/2019</Text>
    </Clock>
    <Cell $w={24} $g={17}>
      <Svg w={24} h={24}><path d="M1 2h16v11H8l-3 3v-3H1z" fill="#e6e6e6" /><path d="M3 5h12M3 8h12M3 11h8" stroke="#222" strokeWidth=".8" /><circle cx="16" cy="16" r="8" fill="#333" stroke="#777" /><text x="16" y="20" textAnchor="middle" fontFamily="Open Sans" fontWeight="600" fontSize="11" fill="#eee">2</text></Svg>
    </Cell>
    <Peek />
  </Taskbar>
);

export default function App() {
  return (
    <Screen>
      <Global />
      <TitleBar>
        <SaveBox>
          <Svg w={16} h={14}><path d="M3 .6h12v12.500H3z" stroke="#8d9cb5" strokeWidth="1.400" /><path d="M7 9h5v4H7z" fill="#8d9cb5" /><path d="M12 6.800H1.500M6 2L1.200 6.800 6 11.600" stroke="#fff" strokeWidth="2" /></Svg>
        </SaveBox>
        <Cell $w={16} $g={14}><Svg w={15} h={13} stroke="#fff" strokeWidth="2.200"><path d="M5.500 0L1.500 4 5.500 8M1.500 4H9q4.500.5 4 4-.5 3.500-4.500 3.500" /></Svg></Cell>
        <Down c="#fff" g={7} />
        <Cell $w={16} $g={17}><Svg w={14} h={14} stroke="#fff" strokeWidth="2.200"><path d="M4 2.200a5.300 5.300 0 1 0 5 0M7.500 7V1.200H13" /></Svg></Cell>
        <Cell $w={8} $g={33}><Svg w={5} h={7}><path d="M0 .5h5" stroke="#fff" /><path d="M0 3h5L2.500 6z" fill="#fff" /></Svg></Cell>
        <Text w={433} $g={299}>Documento1 [Modo de compatibilidad] - Word (Error de activación de productos)</Text>
        <Cell $w={14} $g={299}><Svg w={13} h={11}><path d="M.6.600h12v9.800H.6zM.6 2.500h12" stroke="#fff" strokeWidth="1.200" /><path d="M6.500 9V4.500M4.500 6.500l2-2 2 2" stroke="#fff" /></Svg></Cell>
        <Cell $w={10} $g={34}><Svg w={9} h={2}><path d="M0 1h9" stroke="#fff" strokeWidth="2" /></Svg></Cell>
        <Cell $w={12} $g={35}><Svg w={11} h={10} stroke="#fff" strokeWidth="1.400"><path d="M1 4h6v5H1zM3.500 4V1h6.500v5H7" /></Svg></Cell>
        <Cell $w={12} $g={35}><Svg w={10} h={10}><path d="M.8.800l8.400 8.400M9.200.800L.8 9.200" stroke="#fff" strokeWidth="2.200" /></Svg></Cell>
      </TitleBar>
      <TabBar>
        <Text w={41} $g={9}>Archivo</Text>
        <ActiveTab><Text w={29}>Inicio</Text></ActiveTab>
        {tabs.map(([t, w, g]) => <Text key={t} w={w} $g={g}>{t}</Text>)}
        <Cell $w={10} $g={30}><Svg w={10} h={14} stroke="#a9c0e0" strokeWidth="1.300"><path d="M3 9.500Q1 7 .8 5a4.200 4.200 0 0 1 8.400 0Q9 7 7 9.500zM3 11.500h4M3.500 13.500h3" /></Svg></Cell>
        <Text w={97} $g={6} $color="#a9c0e0">¿Qué desea hacer?</Text>
        <Text w={68} $g={406}>Iniciar sesión</Text>
        <Share>
          <Svg w={17} h={16} stroke="#fff" strokeWidth="1.500"><circle cx="8" cy="5" r="4.200" /><path d="M1 15q0-5 5-6M8 9.500q2 .5 3 2M9 12.500h7M12.500 9v7" /></Svg>
          <Text w={54} $g={3}>Compartir</Text>
        </Share>
      </TabBar>
      <Ribbon>
        <Clipboard />
        <FontGroup />
        <ParagraphGroup />
        <StylesGroup />
        <EditGroup />
        <Collapse><Svg w={9} h={5}><path d="M.8 4.500l3.700-3.700 3.700 3.700" stroke="#555" strokeWidth="1.800" /></Svg></Collapse>
      </Ribbon>
      <Workspace>
        <Page>
          <Paragraph>
            <Text w={612} $font={calibri} $size={17.2} $lh={26.5}>that there are nine specific universal qualities that are necessary for anyone who</Text>
            <Text w={622} $font={calibri} $size={17.2} $lh={26.5}>wants to teach effectively, whether they want to teach in an elementary school or</Text>
            <Text w={603} $font={calibri} $size={17.2} $lh={26}>a university. If any teacher possesses the following characteristics and qualities,</Text>
            <Text w={456} $font={calibri} $size={17.2} $lh={26}>he/she can become a very good teacher with large fan base.</Text>
          </Paragraph>
          <Heading>
            <Text w={164} $font={calibri} $size={17.2} $lh={27} $weight={700}>What Makes a Great </Text>
            <Wavy>
              <Text w={68} $font={calibri} $size={17.2} $lh={27} $weight={700}>teacher :</Text>
              <Svg w={68} h={3} transform="translate(0 -5)"><path d={`M0 2.500${'l2-2 2 2'.repeat(17)}`} stroke="#3a35d6" strokeWidth="1.200" /></Svg>
            </Wavy>
          </Heading>
          {skills.map(([t, w]) => (
            <Bullet key={t}><Text w={w} $font={calibri} $size={17.2} $lh={26}>{t}</Text></Bullet>
          ))}
        </Page>
        <Scrollbar>
          <ScrollBox $h={14}><Svg w={7} h={4}><path d="M0 4h7L3.500 0z" fill="#666" /></Svg></ScrollBox>
          <ScrollBox $h={19} $mt="52px" />
          <ScrollBox $h={14} $mt="auto"><Svg w={7} h={4}><path d="M0 0h7L3.500 4z" fill="#555" /></Svg></ScrollBox>
        </Scrollbar>
      </Workspace>
      <StatusBar>
        <Text w={75} $g={7}>Página 2 de 14</Text>
        <Text w={71} $g={19}>2623 palabras</Text>
        <Cell $w={16} $g={19}><Svg w={15} h={12} stroke="#555"><path d="M7 2Q4 0 .5.500v9Q4 9 7 11V2q1-1 3-1.500M7 11q2-1.500 6-1.500M10 3l4 4M14 3l-4 4" /></Svg></Cell>
        <Text w={105} $g={16}>Inglés (Reino Unido)</Text>
        <Cell $w={14} $g={755}><Svg w={13} h={12} stroke="#777"><path d="M6.500 2Q3 0 .5 1v9q3-1 6 1 3-2 6-1V1q-3-1-6 1v9M2 4h3M2 6h3M8 4h3M8 6h3" /></Svg></Cell>
        <Cell $w={38} $h={21} $g={12} $bg="#cfcfcf"><Svg w={14} h={13} stroke="#777"><path d="M.5.500h13v12H.500zM3 3.500h8M3 5.500h8M3 7.500h8M3 9.500h8" /></Svg></Cell>
        <Cell $w={14} $g={11}><Svg w={13} h={12} stroke="#777"><path d="M.5.500h12v11H.500zM.5 3.500h12" /></Svg></Cell>
        <Cell $w={6} $g={18}><Svg w={6} h={2}><path d="M0 1h6" stroke="#444" strokeWidth="1.500" /></Svg></Cell>
        <Cell $w={100} $g={7}><Svg w={100} h={11}><path d="M0 5.500h100" stroke="#bbb" /><path d="M48 0h4v11h-4z" fill="#444" /></Svg></Cell>
        <Cell $w={7} $g={7}><Svg w={7} h={7}><path d="M0 3.500h7M3.500 0v7" stroke="#444" strokeWidth="1.500" /></Svg></Cell>
        <Text w={30} $g={12}>100 %</Text>
      </StatusBar>
      <Bar />

      <Watermark>
        <Text w={147} $size={19} $lh={27}>Activar Windows</Text>
        <Text w={275} $size={14} $lh={19}>Ve a Configuración para activar Windows.</Text>
      </Watermark>
      <Brand>
        <Svg w={70} h={110}>
          <path d="M16 62Q12 14 38 6q20 8 16 45L54 76 30 106Q24 92 18 60z" transform="translate(26 0)" fill="rgba(190,190,190,.18)" />
          <path d="M4 76q4-10 8-5 2 6 8-2 4 4 8 4 6 4 12 2 10-6 12-22" stroke="rgba(20,20,20,.4)" strokeWidth="1.500" />
        </Svg>
        <BrandWord>Icecream</BrandWord>
        <BrandSub>APPS</BrandSub>
      </Brand>
      <Player>
        <Seek><Played /><Thumb /><Remaining /></Seek>
        <Times><Text w={44} $size={11.5}>00:01:01</Text><Text w={44} $size={11.5}>00:03:59</Text></Times>
        <Controls>
          <Cell $w={20} $g={39}><Volume /></Cell>
          <Cell $w={20} $g={30}><Svg w={20} h={19} stroke="#fff" strokeWidth="1.600"><path d="M.8 1.800h18.400V14H6.800L3 17.500V14H.800zM3 8h14M3 11h14" /></Svg></Cell>
          <Cell $w={22} $g={513}><Skip n="10" /></Cell>
          <Cell $w={14} $g={33}><Svg w={13} h={18}><path d="M1.200 1.500v15L12 9z" stroke="#fff" strokeWidth="1.600" /></Svg></Cell>
          <Cell $w={22} $g={31}><Skip n="30" flip /></Cell>
          <Cell $w={21} $g={413}><Svg w={20} h={20} stroke="#fff" strokeWidth="1.600"><path d="M1 19l1.500-5.500L15 1.200q2.500-.6 4 3L6 17zM12.500 3.500l4 4M2.500 13.500L6 17" /></Svg></Cell>
          <Cell $w={20} $g={29}><Svg w={20} h={14}><path d="M.8.800h18.400v11.900H.800z" stroke="#fff" strokeWidth="1.600" /><path d="M6.500 4.500H17v6H6.500z" fill="#eee" /><path d="M9 8.500v-2h3l2 2v-2h1.500" stroke="#666" /></Svg></Cell>
          <Cell $w={20} $g={30}><Svg w={20} h={20} stroke="#fff" strokeWidth="1.600"><path d="M19.500.500L12 8M12 2v6h6M.5 19.500L8 12M2 12h6v6" /></Svg></Cell>
          <Cell $w={20} $g={30}><Svg w={20} h={4}><circle cx="2" cy="2" r="1.400" fill="#fff" /><circle cx="10" cy="2" r="1.400" fill="#fff" /><circle cx="17.500" cy="2" r="1.400" fill="#fff" /></Svg></Cell>
        </Controls>
      </Player>
      <Caret><Svg w={9} h={16} stroke="#333"><path d="M1 .5h2.500l1 1 1-1H8M4.500 1v14M1 15.500h2.500l1-1 1 1H8" /></Svg></Caret>
      <Chevron $x={6}><Svg w={16} h={28}><path d="M14 3L3 14l11 11" stroke="#999" strokeWidth="3.600" /><path d="M14 3L3 14l11 11" stroke="#eee" strokeWidth="2" /></Svg></Chevron>
      <Chevron $x={1343}><Svg w={16} h={28}><path d="M3 3l11 11L3 25" stroke="#999" strokeWidth="3.600" /><path d="M3 3l11 11L3 25" stroke="#eee" strokeWidth="2" /></Svg></Chevron>
    </Screen>
  );
}
